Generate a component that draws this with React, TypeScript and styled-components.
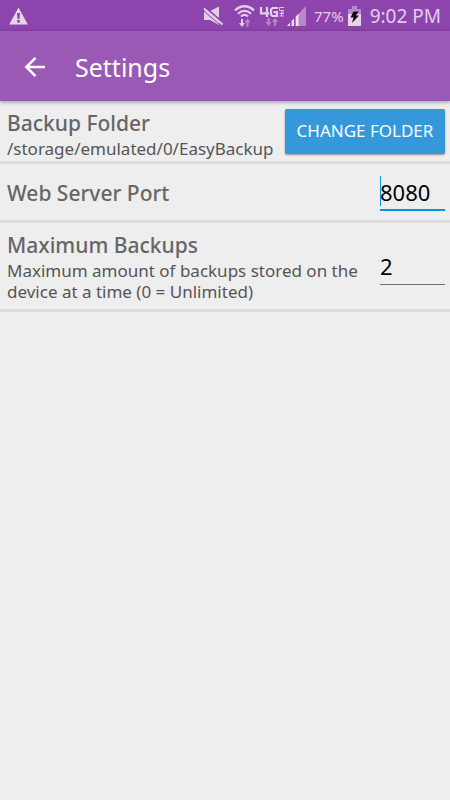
import React, { useState } from "react";
import styled, { createGlobalStyle } from "styled-components";

const GlobalStyle = createGlobalStyle`
  *, *::before, *::after { box-sizing: border-box; }
  body {
    margin: 0;
    background: #eeeeee;
    font-family: "Noto Sans", sans-serif;
  }
`;

const Screen = styled.div`
  min-height: 100vh;
  background: #eeeeee;
`;

const StatusBar = styled.div`
  display: flex;
  align-items: center;
  height: 31px;
  padding: 0 9px;
  background: #8e44ad;
  color: #e2cdea;

  svg { display: block; flex: none; }
`;

const StatusIcons = styled.div`
  display: flex;
  align-items: center;
  margin-left: auto;
`;

const IconSlot = styled.span<{ $gap: number }>`
  margin-right: ${(p) => p.$gap}px;
`;

const Battery = styled.span`
  margin-right: 4px;
  font-size: 15px;
  line-height: 20px;
`;

const Clock = styled.time`
  margin-left: 9px;
  font-size: 19px;
  line-height: 28px;
`;

const AppBar = styled.header`
  position: relative;
  display: flex;
  align-items: center;
  gap: 26px;
  height: 70px;
  padding: 2px 21px 0;
  background: #9b59b6;
  box-shadow: 0 1px 4px rgba(0, 0, 0, 0.4);
`;

const BackButton = styled.button`
  display: block;
  padding: 0;
  border: 0;
  background: none;
  cursor: pointer;

  svg { display: block; }
`;

const Title = styled.h1`
  margin: 0;
  color: #ffffff;
  font-size: 25px;
  font-weight: 400;
  line-height: 34px;
`;

const Row = styled.section<{ $height: number }>`
  display: flex;
  align-items: center;
  gap: 8px;
  min-height: ${(p) => p.$height}px;
  padding: 0 5px 0 7px;
  border-bottom: 3px solid #dcdcdc;
`;

const RowText = styled.div<{ $top?: number }>`
  flex: 1;
  min-width: 0;
  padding-top: ${(p) => p.$top ?? 0}px;
`;

const RowTitle = styled.label`
  display: block;
  color: #666666;
  font-size: 21px;
  font-weight: 500;
  line-height: 30px;
`;

const RowDetail = styled.p`
  margin: 0;
  color: #555555;
  font-size: 17px;
  line-height: 21px;
`;

const FolderButton = styled.button`
  flex: none;
  min-width: 160px;
  height: 45px;
  padding: 0 10px;
  border: 0;
  border-radius: 2px;
  background: #3498db;
  color: #ffffff;
  box-shadow: 0 1px 2px rgba(0, 0, 0, 0.4);
  font-family: inherit;
  font-size: 17px;
  line-height: 24px;
  cursor: pointer;
`;

const Field = styled.div`
  position: relative;
  flex: none;
  width: 65px;
`;

const NumberInput = styled.input<{ $active?: boolean }>`
  display: block;
  width: 100%;
  height: 38px;
  padding: 2px 0 1px;
  border: 0;
  border-bottom: ${(p) => (p.$active ? "2px solid #0a94dc" : "1px solid #6f6f6f")};
  border-radius: 0;
  outline: 0;
  background: none;
  color: #000000;
  font-family: inherit;
  font-size: 22px;
  line-height: 30px;
`;

const Caret = styled.span`
  position: absolute;
  top: 3px;
  left: 0;
  width: 1px;
  height: 30px;
  background: #0a94dc;
`;

const WarningIcon = () => (
  <svg width="19" height="18" viewBox="0 0 19 18" aria-hidden="true">
    <path d="M9.5 0.5 L18.8 17.5 H0.2 Z" fill="#e6d4ec" />
    <path d="M8 6h3l-.6 6H8.6zM8.2 13h2.6v2.4H8.2z" fill="#8e44ad" />
  </svg>
);

const MutedIcon = () => (
  <svg width="21" height="20" viewBox="0 0 21 20" aria-hidden="true">
    <path d="M1 5h6l9-4.500v18.500L7 14H1z" fill="#e2cdea" />
    <path d="M2 1.200L20 16.700" stroke="#8e44ad" strokeWidth="2" />
    <path d="M1 2.500L19.500 18.500" stroke="#e2cdea" strokeWidth="2" />
    <path d="M0 4.200L18 19.800" stroke="#8e44ad" strokeWidth="1" />
  </svg>
);

const WifiIcon = () => (
  <svg width="21" height="22" viewBox="0 0 21 22" fill="none" aria-hidden="true">
    <path
      d="M1 5.500C6.500 -.2 14.500 -.2 20 5.500M4 8.700c3.800-3.700 9.200-3.700 13 0M7 11.500c2.200-2 4.800-2 7 0"
      stroke="#e2cdea"
      strokeWidth="2.300"
    />
    <path d="M7 14h2v4h2l-3 4-3-4h2z" fill="#e2cdea" />
    <path d="M12.500 22v-4.500h-2l3-4 3 4h-2V22z" fill="#b98acb" />
  </svg>
);

const NetworkIcon = () => (
  <svg width="26" height="20" viewBox="0 0 26 20" fill="none" aria-hidden="true">
    <path
      d="M2 1v6.300H10M8 1v10M19 2h-5.500L12 3.500v5L13.500 10H18V6.200h-3.500"
      stroke="#e2cdea"
      strokeWidth="2.200"
    />
    <path d="M20.500 1.500h4.500M20.500 1v3.500M20.500 4.500H25M22 6h3M20.500 7.500H25M20.500 10h4.500M22.500 6v4" stroke="#dcc2e5" />
    <path d="M8.500 12h2v4h2l-3 4-3-4h2zM15 20v-4h-2l3-4 3 4h-2v4z" fill="#b98acb" />
  </svg>
);

const SignalIcon = () => (
  <svg width="20" height="20" viewBox="0 0 20 20" aria-hidden="true">
    <path d="M19 0v20H0z" fill="#b98acb" />
    <path d="M.5 19.500L3 16.800V20H.5zM4.500 15.300l2.500-2.700V20H4.500zM8.500 11l3-3.200V20h-3z" fill="#f0e4f4" />
    <path d="M3 16.800V20h1.500v-4.700zM7 12.600V20h1.500v-9z" fill="#8e44ad" />
  </svg>
);

const BatteryIcon = () => (
  <svg width="13" height="20" viewBox="0 0 13 20" aria-hidden="true">
    <path d="M4 0h5v3h4v5H0V3h4z" fill="#b98acb" />
    <path d="M0 8h13v12H0z" fill="#e6d4ec" />
    <path d="M5.500 5.500h5L8 9.500h3L4 17l1.500-5.500h-3z" fill="#15091a" />
  </svg>
);

const BackArrow = () => (
  <svg width="28" height="28" viewBox="0 0 28 28" fill="none" aria-hidden="true">
    <path d="M24 14H6M14.500 4.800L5.300 14l9.200 9.200" stroke="#ffffff" strokeWidth="2.500" />
  </svg>
);

export default function App() {
  const [port, setPort] = useState("8080");
  const [maximum, setMaximum] = useState("2");

  return (
    <Screen>
      <GlobalStyle />
      <StatusBar>
        <WarningIcon />
        <StatusIcons>
          <IconSlot $gap={10}><MutedIcon /></IconSlot>
          <IconSlot $gap={4}><WifiIcon /></IconSlot>
          <IconSlot $gap={2}><NetworkIcon /></IconSlot>
          <IconSlot $gap={7}><SignalIcon /></IconSlot>
          <Battery>77%</Battery>
          <BatteryIcon />
          <Clock>9:02 PM</Clock>
        </StatusIcons>
      </StatusBar>
      <AppBar>
        <BackButton type="button" aria-label="Back"><BackArrow /></BackButton>
        <Title>Settings</Title>
      </AppBar>
      <main>
        <Row $height={63}>
          <RowText $top={4}>
            <RowTitle as="div">Backup Folder</RowTitle>
            <RowDetail>/storage/emulated/0/EasyBackup</RowDetail>
          </RowText>
          <FolderButton type="button">CHANGE FOLDER</FolderButton>
        </Row>
        <Row $height={59}>
          <RowText $top={2}>
            <RowTitle htmlFor="port">Web Server Port</RowTitle>
          </RowText>
          <Field>
            <NumberInput
              id="port"
              inputMode="numeric"
              $active
              value={port}
              onChange={(e) => setPort(e.target.value)}
            />
            <Caret />
          </Field>
        </Row>
        <Row $height={89}>
          <RowText>
            <RowTitle htmlFor="maximum">Maximum Backups</RowTitle>
            <RowDetail id="maximum-detail">
              Maximum amount of backups stored on the device at a time (0 = Unlimited)
            </RowDetail>
          </RowText>
          <Field>
            <NumberInput
              id="maximum"
              inputMode="numeric"
              aria-describedby="maximum-detail"
              value={maximum}
              onChange={(e) => setMaximum(e.target.value)}
            />
          </Field>
        </Row>
      </main>
    </Screen>
  );
}
